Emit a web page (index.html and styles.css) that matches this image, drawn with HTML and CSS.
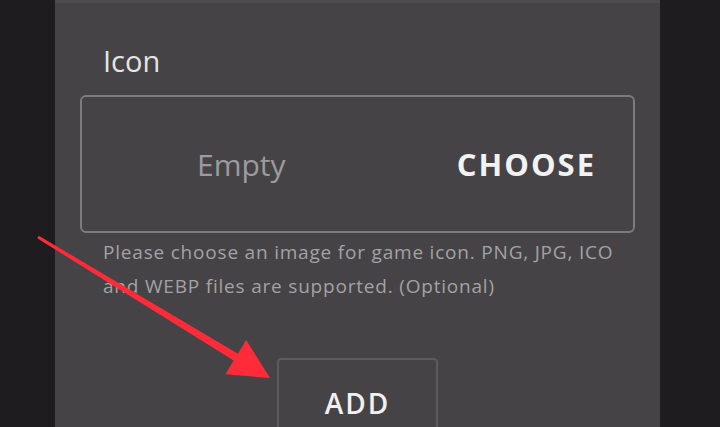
FILE: index.html
```html
<!DOCTYPE html>
<html lang="en">
<head>
    <meta charset="UTF-8">
    <meta name="viewport" content="width=device-width, initial-scale=1.0">
    <title>Add Game</title>
    <link rel="stylesheet" href="styles.css">
</head>
<body>

<div class="panel">
    <div class="field">
        <div class="field-label">Icon</div>
        <div class="picker">
            <span class="picker-value">Empty</span>
            <span class="picker-action">CHOOSE</span>
        </div>
        <p class="hint">Please choose an image for game icon. PNG, JPG, ICO<br>and WEBP files are supported. (Optional)</p>
    </div>

    <div class="actions">
        <button class="add-btn">ADD</button>
    </div>
</div>

<!-- red pointer drawn over the screenshot -->
<svg class="pointer" width="720" height="427" viewBox="0 0 720 427">
    <polygon fill="#ff2b39" points="38.8,235.7 237.9,353.8 246.2,340.1 270,378 225.4,374.3 233.7,360.6 37.2,238.3"/>
</svg>

</body>
</html>
```

FILE: styles.css
```css
body {
    margin: 0;
    height: 427px;
    overflow: hidden;
    background-color: #1e1c1f;
    font-family: 'Open Sans', 'DejaVu Sans', sans-serif;
    position: relative;
}

.panel {
    margin: 0 60px 0 55px;
    height: 100%;
    padding: 0 25px;
    background-color: #454346;
    border-top: 3px solid #4d4b4e;
    box-sizing: border-box;
    overflow: hidden;
}

.field-label {
    padding: 41px 0 0 23px;
    font-size: 29px;
    line-height: 34px;
    color: #e4e4e4;
}

.picker {
    margin-top: 17px;
    height: 138px;
    display: flex;
    justify-content: space-between;
    align-items: center;
    padding: 0 37px 0 115px;
    border: 2px solid #7c7b7d;
    border-radius: 6px;
    box-sizing: border-box;
}

.picker-value {
    font-size: 30px;
    color: #9c9b9d;
}

.picker-action {
    font-size: 31px;
    font-weight: 700;
    letter-spacing: 2px;
    color: #f2f2f2;
}

.hint {
    margin: 2px 0 0 23px;
    font-size: 19px;
    line-height: 34px;
    letter-spacing: 0.8px;
    color: #a3a2a4;
}

.actions {
    display: flex;
    justify-content: center;
    margin-top: 55px;
}

.add-btn {
    width: 161px;
    padding: 26px 0 40px;
    background: none;
    border: 2px solid #5c5a5d;
    border-radius: 4px;
    font-family: inherit;
    font-size: 28px;
    font-weight: 600;
    line-height: 34px;
    letter-spacing: 2px;
    color: #f0f0f0;
}

.pointer {
    position: absolute;
    top: 0;
    left: 0;
    pointer-events: none;
}
```
